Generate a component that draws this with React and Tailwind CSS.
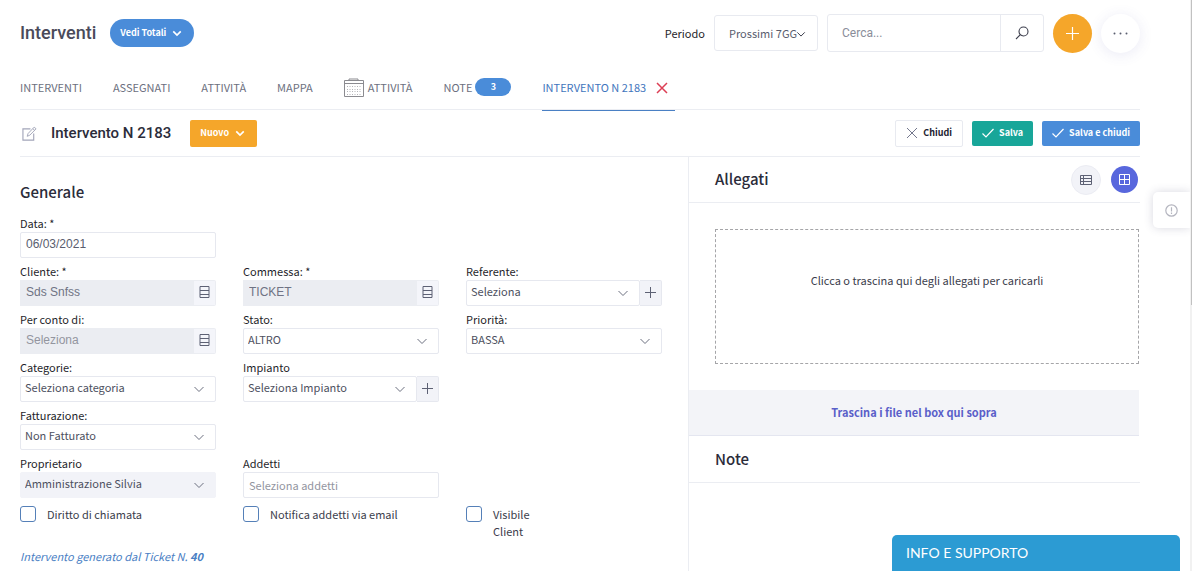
const sans = "font-['Noto_Sans_CJK_SC',sans-serif]"

function Chevron({ className = 'h-3 w-3', strokeWidth = 1 }) {
  return (
    <svg viewBox="0 0 12 12" fill="none" stroke="currentColor" strokeWidth={strokeWidth} className={className}>
      <path d="M1.5 4 6 8.5 10.5 4" />
    </svg>
  )
}

function Plus({ className = 'h-[11px] w-[11px]' }) {
  return (
    <svg viewBox="0 0 11 11" fill="none" stroke="currentColor" className={className}>
      <path d="M5.5 0v11M0 5.5h11" />
    </svg>
  )
}

function Check() {
  return (
    <svg viewBox="0 0 12 10" fill="none" stroke="currentColor" strokeWidth="1.2" className="h-[10px] w-3">
      <path d="M0.5 5.5 4 9 11.5 1" />
    </svg>
  )
}

function Cross({ className, strokeWidth = 1 }) {
  return (
    <svg viewBox="0 0 12 12" fill="none" stroke="currentColor" strokeWidth={strokeWidth} className={className}>
      <path d="m1 1 10 10M11 1 1 11" />
    </svg>
  )
}

function Rows() {
  return (
    <svg viewBox="0 0 11 12" fill="none" stroke="currentColor" className="h-3 w-[11px]">
      <path d="M1 0.5h9v11H1zM1 4.5h9M1 8.5h9" />
    </svg>
  )
}

function CalendarIcon() {
  return (
    <svg viewBox="0 0 20 19" fill="none" stroke="#8b8b90" className="h-[19px] w-5">
      <path d="M0.5 2.5h19v16H0.5zM0.5 5.5h19" />
      <path d="M5 2.5v-1.5h9v1.5" />
      <path d="M3 8.5h14M3 11.5h14M3 13.5h14M3 16.5h14" stroke="#b4b4b8" strokeDasharray="1 1.5" />
    </svg>
  )
}

function Field({ id, label, children }) {
  return (
    <div className="min-w-0 pb-1">
      <label htmlFor={id} className="block text-[11px] leading-[18px] text-[#1f1f2b]">{label}</label>
      <div className="flex h-[26px]">{children}</div>
    </div>
  )
}

function SelectBox({ id, value, disabled, addon }) {
  return (
    <>
      <div className="relative min-w-0 flex-1">
        <select
          id={id}
          disabled={disabled}
          className={`block h-full w-full appearance-none rounded-[2px] border pb-1 pl-1 text-[11px] leading-4 text-[#4d5060] opacity-100 ${disabled ? 'border-[#f2f3f8] bg-[#f2f3f8]' : 'border-[#e6e8ef] bg-white'}`}
        >
          <option>{value}</option>
        </select>
        <Chevron className="pointer-events-none absolute top-[7px] right-[11px] h-3 w-3 text-[#6c7080]" />
      </div>
      {addon ? (
        <button type="button" aria-label="Aggiungi" className="flex w-[22px] items-center justify-center rounded-r-[2px] border border-l-0 border-[#e6e8ef] bg-[#f2f3f8] pb-[2px] text-[#5d6174]">
          <Plus />
        </button>
      ) : null}
    </>
  )
}

function LookupBox({ id, value, placeholder }) {
  return (
    <>
      <input
        id={id}
        readOnly
        defaultValue={value}
        placeholder={placeholder}
        className="min-w-0 flex-1 bg-[#ebedf2] pb-[2px] pl-[6px] font-['Liberation_Sans',sans-serif] text-xs text-[#6f7384] placeholder:text-[#93959f]"
      />
      <button type="button" aria-label="Cerca" className="flex w-[22px] items-center justify-center rounded-r-[2px] border border-l-0 border-[#ebedf2] bg-[#f4f5fa] pb-[2px] text-[#5d6174]">
        <Rows />
      </button>
    </>
  )
}

function CheckField({ label, labelClass = '' }) {
  return (
    <label className="flex items-start gap-[11px] text-[11px] leading-[17px] text-[#3b3d4c]">
      <input type="checkbox" className="h-4 w-4 shrink-0 appearance-none rounded-[3px] border border-[#5580b8] bg-white" />
      <span className={labelClass}>{label}</span>
    </label>
  )
}

function Header() {
  return (
    <header className="flex h-[66px] items-center">
      <h1 className="font-['Roboto',sans-serif] text-lg font-medium text-[#4a4b5a]">Interventi</h1>
      <button type="button" className="ml-[14px] flex h-7 items-center gap-[6px] rounded-full bg-[#4a8cd9] pr-3 pl-[10px] text-[9px] font-bold text-white">
        Vedi Totali
        <Chevron className="h-[10px] w-[10px]" strokeWidth={2} />
      </button>
      <label htmlFor="periodo" className="ml-auto text-[11px] text-[#1f1f2b]">Periodo</label>
      <div className="relative ml-[9px] h-9 w-[104px]">
        <select id="periodo" className="block h-full w-full appearance-none rounded-[3px] border border-[#e8eaf0] bg-white pl-[14px] text-[11px] text-[#595d6e]">
          <option>Prossimi 7GG</option>
        </select>
        <Chevron className="pointer-events-none absolute top-[14px] right-3 h-[10px] w-[10px] text-[#3b3d4c]" strokeWidth={1.2} />
      </div>
      <div className="ml-[9px] flex h-[38px] w-[217px] rounded-[3px] border border-[#e8eaf0]">
        <input aria-label="Cerca" placeholder="Cerca..." className="min-w-0 flex-1 pl-[14px] font-['Roboto',sans-serif] text-xs placeholder:text-[#8a8d99]" />
        <button type="button" aria-label="Avvia ricerca" className="flex w-[43px] items-center justify-center border-l border-[#e8eaf0] text-[#3b3d4c]">
          <svg viewBox="0 0 14 14" fill="none" stroke="currentColor" strokeWidth="1.1" className="h-[14px] w-[14px]">
            <circle cx="8.5" cy="5.5" r="4.5" />
            <path d="M5.3 8.7 1 13" />
          </svg>
        </button>
      </div>
      <button type="button" aria-label="Nuovo intervento" className="ml-[9px] flex h-[39px] w-[39px] items-center justify-center rounded-full bg-[#f5a62a] text-white">
        <Plus className="h-[13px] w-[13px]" />
      </button>
      <button type="button" aria-label="Altro" className="ml-[9px] flex h-[39px] w-[39px] items-center justify-center rounded-full bg-white text-[#595d6e] shadow-[0_2px_14px_rgba(80,80,170,0.12)]">
        <svg viewBox="0 0 15 3" fill="currentColor" className="h-[3px] w-[15px]">
          <circle cx="1.5" cy="1.5" r="1" />
          <circle cx="7.5" cy="1.5" r="1" />
          <circle cx="13.5" cy="1.5" r="1" />
        </svg>
      </button>
    </header>
  )
}

function Tabs() {
  return (
    <nav className="flex h-11 items-stretch gap-[31px] border-b border-[#ebedf2] text-[11px] text-[#6c7080]">
      <a href="#interventi" className="flex h-[42px] items-center">INTERVENTI</a>
      <a href="#assegnati" className="flex h-[42px] items-center">ASSEGNATI</a>
      <a href="#attivita" className="flex h-[42px] items-center">ATTIVITÀ</a>
      <a href="#mappa" className="flex h-[42px] items-center">MAPPA</a>
      <a href="#calendario" className="flex h-[42px] items-center gap-1">
        <CalendarIcon />
        ATTIVITÀ
      </a>
      <a href="#note" className="flex h-[42px] items-center gap-[3px]">
        NOTE
        <span className="flex h-[18px] w-9 items-center justify-center rounded-full bg-[#4a8cd9] text-[9px] font-bold text-white">3</span>
      </a>
      <div className="flex h-[45px] items-stretch gap-[10px] border-b border-[#4a80c4] pr-[7px] text-[#3f76bd]">
        <a href="#intervento" className="flex h-[42px] items-center">INTERVENTO N 2183</a>
        <button type="button" aria-label="Chiudi scheda" className="flex h-11 items-center text-[#dc3f55]">
          <Cross className="h-3 w-3" strokeWidth={1.5} />
        </button>
      </div>
    </nav>
  )
}

function TitleBar() {
  return (
    <div className="flex h-[47px] items-center border-b border-[#ebedf2]">
      <svg viewBox="0 0 16 16" fill="none" stroke="#a2a5b9" className="ml-[2px] h-[15px] w-[15px]">
        <path d="M9 3H1v12h11.5V8" strokeWidth="1.2" />
        <path d="M5.5 11 6.5 8 13 1.2 15 3 8.3 9.8zM11.5 2.8l2 1.8" />
      </svg>
      <h2 className="ml-[14px] font-['Roboto',sans-serif] text-[15px] font-medium text-[#2b2c3a]">Intervento N 2183</h2>
      <button type="button" className="ml-[19px] flex h-[27px] items-center gap-[6px] rounded-[2px] bg-[#f5a62a] pr-3 pl-[10px] text-[9px] font-bold text-white">
        Nuovo
        <Chevron className="h-[10px] w-[10px]" strokeWidth={2} />
      </button>
      <div className="ml-auto flex items-center gap-[9px] text-[9px] font-bold">
        <button type="button" className="flex h-[27px] items-center gap-[5px] rounded-[2px] border border-[#e8eaf0] px-[10px] text-[#212130]">
          <Cross className="h-3 w-3 text-[#74788d]" />
          Chiudi
        </button>
        <button type="button" className="flex h-[25px] items-center gap-[5px] rounded-[2px] bg-[#18a699] px-[10px] text-white">
          <Check />
          Salva
        </button>
        <button type="button" className="flex h-[25px] items-center gap-[5px] rounded-[2px] bg-[#4a8cd9] px-[10px] text-white">
          <Check />
          Salva e chiudi
        </button>
      </div>
    </div>
  )
}

function GeneralForm() {
  return (
    <form className="pt-[23px] pr-[26px]">
      <h3 className="text-[15px] leading-6 font-medium text-[#2b2c3a]">Generale</h3>
      <div className="mt-[10px] grid grid-cols-3 gap-x-[27px]">
        <Field id="data" label="Data: *">
          <input id="data" defaultValue="06/03/2021" className="w-full rounded-[2px] border border-[#e6e8ef] pb-[2px] pl-[5px] font-['Liberation_Sans',sans-serif] text-xs text-[#595d6e]" />
        </Field>
        <div className="col-span-2" />
        <Field id="cliente" label="Cliente: *"><LookupBox id="cliente" value="Sds Snfss" /></Field>
        <Field id="commessa" label="Commessa: *"><LookupBox id="commessa" value="TICKET" /></Field>
        <Field id="referente" label="Referente:"><SelectBox id="referente" value="Seleziona" addon /></Field>
        <Field id="conto" label="Per conto di:"><LookupBox id="conto" placeholder="Seleziona" /></Field>
        <Field id="stato" label="Stato:"><SelectBox id="stato" value="ALTRO" /></Field>
        <Field id="priorita" label="Priorità:"><SelectBox id="priorita" value="BASSA" /></Field>
        <Field id="categorie" label="Categorie:"><SelectBox id="categorie" value="Seleziona categoria" /></Field>
        <Field id="impianto" label="Impianto"><SelectBox id="impianto" value="Seleziona Impianto" addon /></Field>
        <div />
        <Field id="fatturazione" label="Fatturazione:"><SelectBox id="fatturazione" value="Non Fatturato" /></Field>
        <div className="col-span-2" />
        <Field id="proprietario" label="Proprietario"><SelectBox id="proprietario" value="Amministrazione Silvia" disabled /></Field>
        <Field id="addetti" label="Addetti">
          <input id="addetti" placeholder="Seleziona addetti" className="w-full rounded-[2px] border border-[#e6e8ef] pl-[5px] text-[11px] placeholder:text-[#93959f]" />
        </Field>
      </div>
      <div className="mt-1 grid grid-cols-3 gap-x-[27px]">
        <CheckField label="Diritto di chiamata" />
        <CheckField label="Notifica addetti via email" />
        <CheckField label="Visibile Client" labelClass="w-12" />
      </div>
      <p className="mt-2 text-[11px] leading-4 text-[#4a80c4] italic">
        Intervento generato dal Ticket N. <b>40</b>
      </p>
    </form>
  )
}

function Attachments() {
  return (
    <section className="min-h-[415px] border-l border-[#ebedf2]">
      <div className="flex h-[46px] items-center border-b border-[#ebedf2] pl-[26px]">
        <h3 className="text-[15px] font-medium text-[#2b2c3a]">Allegati</h3>
        <div className="ml-auto flex items-center gap-[10px] pr-[2px]">
          <button type="button" aria-label="Vista elenco" className="flex h-[30px] w-[30px] items-center justify-center rounded-full border border-[#ebecf3] bg-[#f2f3f8] text-[#5d6174]">
            <svg viewBox="0 0 12 10" fill="none" stroke="currentColor" className="h-[10px] w-3">
              <path d="M0.5 0.5h11v9H0.5zM0.5 3.5h11M0.5 6.5h11M3.5 0.5v9" />
            </svg>
          </button>
          <button type="button" aria-label="Vista griglia" className="flex h-[27px] w-[27px] items-center justify-center rounded-full bg-[#5867dd] text-white">
            <svg viewBox="0 0 11 11" fill="none" stroke="currentColor" className="h-[11px] w-[11px]">
              <path d="M0.5 0.5h10v10H0.5zM5.5 0.5v10M0.5 5.5h10" />
            </svg>
          </button>
        </div>
      </div>
      <div className="mt-[26px] mr-px ml-[26px] flex h-[135px] justify-center border border-dashed border-[#a5a5a8] pt-[42px]">
        <p className="text-[11px] leading-4 text-[#3b3d4c]">Clicca o trascina qui degli allegati per caricarli</p>
      </div>
      <div className="mt-[26px] mr-px flex h-[46px] items-center justify-center border-b border-[#e4e6f0] bg-[#f3f4f8] text-[11px] font-bold text-[#5a5fc9]">
        Trascina i file nel box qui sopra
      </div>
      <div className="flex h-[47px] items-center border-b border-[#ebedf2] pl-[26px]">
        <h3 className="text-[15px] font-medium text-[#2b2c3a]">Note</h3>
      </div>
    </section>
  )
}

export default function App() {
  return (
    <div className={`relative h-screen overflow-hidden bg-white pr-[52px] pl-5 ${sans}`}>
      <Header />
      <Tabs />
      <TitleBar />
      <main className="grid grid-cols-[668fr_452fr]">
        <GeneralForm />
        <Attachments />
      </main>
      <button type="button" aria-label="Informazioni" className="absolute top-48 right-[2px] flex h-9 w-[37px] items-center justify-center rounded-l-[5px] bg-white text-[#b4b5bf] shadow-[0_0_10px_rgba(60,60,100,0.2)]">
        <svg viewBox="0 0 13 13" fill="none" stroke="currentColor" strokeWidth="1.2" className="h-[13px] w-[13px]">
          <circle cx="6.5" cy="6.5" r="5.7" />
          <path d="M6.5 3.2v4.2M6.5 8.6v1.4" />
        </svg>
      </button>
      {/* page scroll track and thumb */}
      <div className="absolute inset-y-0 right-0 w-[2px] bg-[#f1f1f1]">
        <div className="ml-px h-[305px] bg-[#c1c1c1]" />
      </div>
      <button type="button" className="absolute right-3 bottom-0 h-9 w-72 rounded-t-[5px] bg-[#2c9bd3] pl-[14px] text-left font-['Lato',sans-serif] text-sm text-white">
        INFO E SUPPORTO
      </button>
    </div>
  )
}
